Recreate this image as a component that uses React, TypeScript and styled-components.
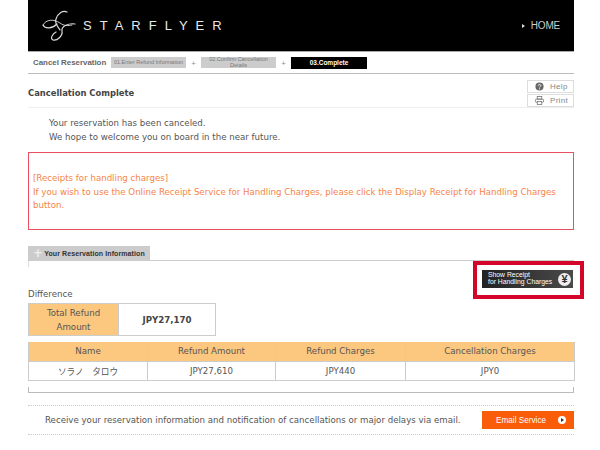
import React from 'react';
import styled, { createGlobalStyle } from 'styled-components';

const GlobalStyle = createGlobalStyle`
  * {
    box-sizing: border-box;
  }
  html, body {
    margin: 0;
    padding: 0;
    background: #fff;
  }
  body {
    font-family: "DejaVu Sans", Verdana, sans-serif;
    font-size: 8.65px;
    color: #555;
  }
`;

const Page = styled.div`
  width: 546px;
  height: 450px;
  margin-left: 28px;
`;

const Header = styled.header`
  height: 52px;
  background: #000;
  display: flex;
  align-items: center;
  justify-content: space-between;
  padding: 0 14px;
  border-bottom: 1px solid #aaa;
`;

const Brand = styled.div`
  display: flex;
  align-items: center;
  gap: 7px;
`;

const Wordmark = styled.span`
  font-family: "Liberation Sans", Arial, sans-serif;
  font-size: 13px;
  letter-spacing: 8px;
  color: #e8e8e8;
`;

const HomeLink = styled.div`
  display: flex;
  align-items: center;
  gap: 6px;
  font-family: "Liberation Sans", Arial, sans-serif;
  font-size: 10px;
  letter-spacing: -0.2px;
  color: #ccc;
  &::before {
    content: "";
    border-left: 3px solid #ddd;
    border-top: 2.5px solid transparent;
    border-bottom: 2.5px solid transparent;
  }
`;

const StepBar = styled.nav`
  height: 22px;
  display: flex;
  align-items: center;
  padding-left: 5px;
  border-bottom: 1px solid #bbb;
`;

const StepTitle = styled.span`
  font-family: "Liberation Sans", Arial, sans-serif;
  font-size: 7.9px;
  font-weight: bold;
  color: #666;
  width: 78px;
  white-space: nowrap;
`;

const Step = styled.span<{ $active?: boolean }>`
  width: ${p => (p.$active ? 76 : 75)}px;
  height: ${p => (p.$active ? 12 : 11)}px;
  display: flex;
  align-items: center;
  justify-content: center;
  text-align: center;
  font-family: "Liberation Sans", Arial, sans-serif;
  font-size: ${p => (p.$active ? 6.5 : 5.5)}px;
  line-height: 5.5px;
  font-weight: ${p => (p.$active ? 'bold' : 'normal')};
  background: ${p => (p.$active ? '#000' : '#ccc')};
  color: ${p => (p.$active ? '#fff' : '#777')};
`;

const StepSep = styled.span`
  width: 15px;
  text-align: center;
  font-size: 6px;
  color: #888;
`;

const TitleRow = styled.div`
  height: 34px;
  display: flex;
  align-items: flex-start;
  justify-content: space-between;
  padding-top: 6px;
  border-bottom: 1px solid #eee;
`;

const PageTitle = styled.h1`
  margin: 7px 0 0;
  font-size: 8.4px;
  line-height: 12px;
  font-weight: bold;
  color: #444;
`;

const ToolColumn = styled.div`
  display: flex;
  flex-direction: column;
  gap: 1px;
`;

const ToolButton = styled.div`
  width: 47px;
  height: 13px;
  border: 1px solid #ddd;
  display: flex;
  align-items: center;
  gap: 6px;
  padding: 0 0 1px 7px;
  font-family: "Liberation Sans", Arial, sans-serif;
  font-size: 8px;
  letter-spacing: 0.3px;
  color: #888;
`;

const Message = styled.div`
  padding: 8px 0 0 21px;
  height: 37px;
  line-height: 14px;
`;

const Notice = styled.div`
  margin-top: 7px;
  height: 78px;
  border: 1px solid #e8505f;
  padding: 19px 4px 0;
  line-height: 13.7px;
  color: #f58448;
`;

const Tab = styled.div`
  margin-top: 16px;
  height: 14px;
  width: 122px;
  background: #ccc;
  display: flex;
  align-items: center;
  gap: 1px;
  padding-left: 5px;
  font-family: "Liberation Sans", Arial, sans-serif;
  font-size: 7px;
  letter-spacing: 0.1px;
  font-weight: bold;
  white-space: nowrap;
  color: #333;
`;

const TabPlus = styled.span`
  font-family: "DejaVu Sans", sans-serif;
  font-size: 12px;
  line-height: 12px;
  color: #eee;
`;

const SectionRule = styled.div`
  position: relative;
  height: 39px;
  border-top: 1px solid #ccc;
  display: flex;
  align-items: flex-end;
  justify-content: space-between;
  &::before {
    content: "";
    position: absolute;
    left: 0;
    top: 0;
    width: 1px;
    height: 6px;
    background: #ddd;
  }
`;

const Caption = styled.div``;

const ReceiptFrame = styled.div`
  width: 111px;
  height: 38px;
  border: 4px solid #d3062a;
  margin-right: -10px;
  padding: 5px 7px 7px 5px;
`;

const ReceiptButton = styled.div`
  height: 18px;
  background: linear-gradient(90deg, #222, #4a4a4a);
  display: flex;
  align-items: center;
  justify-content: space-between;
  padding: 0 2px 0 6px;
  font-family: "Liberation Sans", Arial, sans-serif;
  font-size: 6.8px;
  line-height: 6.8px;
  white-space: nowrap;
  color: #fff;
`;

const YenDot = styled.span`
  width: 13px;
  height: 13px;
  border-radius: 50%;
  background: #eee;
  color: #333;
  display: flex;
  align-items: center;
  justify-content: center;
  font-size: 11px;
  font-weight: bold;
`;

const TotalTable = styled.table`
  margin-top: 4px;
  width: 188px;
  height: 33px;
  border-collapse: collapse;
  table-layout: fixed;
`;

const TotalLabel = styled.th`
  width: 90px;
  padding: 0;
  border: 1px solid #ccc;
  background: #fcc77f;
  font-weight: normal;
  line-height: 14px;
  color: #555;
`;

const TotalValue = styled.td`
  padding: 0;
  border: 1px solid #ccc;
  text-align: center;
  font-weight: bold;
  color: #444;
`;

const ChargesTable = styled.table`
  margin-top: 6px;
  width: 546px;
  border-collapse: collapse;
  table-layout: fixed;
`;

const HeadCell = styled.th<{ $width: number }>`
  width: ${p => p.$width}px;
  height: 19px;
  padding: 0;
  border: 1px solid #ccc;
  border-top: 0;
  background: #fcc77f;
  font-weight: normal;
  color: #555;
`;

const BodyCell = styled.td`
  height: 19px;
  padding: 0;
  border: 1px solid #ccc;
  text-align: center;
  color: #555;
  font-family: "DejaVu Sans", "Noto Sans CJK JP", sans-serif;
`;

const ClosingRule = styled.div`
  margin-top: 6px;
  height: 6px;
  border: 1px solid #bbb;
  border-top: 0;
`;

const MailRow = styled.div`
  margin-top: 12px;
  height: 30px;
  border-top: 1px dotted #ccc;
  border-bottom: 1px dotted #ccc;
  display: flex;
  align-items: center;
  justify-content: space-between;
  padding-left: 17px;
  white-space: nowrap;
`;

const MailButton = styled.div`
  width: 92px;
  height: 18px;
  background: #f95d0a;
  display: flex;
  align-items: center;
  justify-content: space-between;
  padding: 1px 8px 0 14px;
  font-family: "Liberation Sans", Arial, sans-serif;
  font-size: 8.2px;
  color: #fff;
`;

const MailDot = styled.span`
  width: 8px;
  height: 8px;
  border-radius: 50%;
  background: #fff;
  display: flex;
  align-items: center;
  justify-content: center;
  &::after {
    content: "";
    border-left: 3px solid #333;
    border-top: 2px solid transparent;
    border-bottom: 2px solid transparent;
  }
`;

const Logo = () => (
  <svg width="34" height="32" viewBox="0 0 34 32" fill="none" stroke="#dcdcdc" strokeLinecap="round">
    <path d="M1 15 C4 9 12 9 18 13 C22 16 26 16 30 15" strokeWidth="0.9" />
    <path d="M1 15 C3 19 10 19 15 14" strokeWidth="1.1" />
    <path d="M25 2 C21 0 16 3 14 9 C12 15 17 17 18 20" strokeWidth="1.2" />
    <path d="M33 14 C27 13 19 16 20 21 C21 26 15 31 11 30 C8 29 10 24 14 22" strokeWidth="1.2" />
  </svg>
);

const HelpIcon = () => (
  <svg width="9" height="9" viewBox="0 0 10 10">
    <circle cx="5" cy="5" r="4.5" fill="#666" />
    <path d="M3.5 4 C3.5 2.4 6.5 2.4 6.5 4 C6.5 5 5 5 5 6" stroke="#fff" strokeWidth="1.1" fill="none" />
    <circle cx="5" cy="7.6" r="0.7" fill="#fff" />
  </svg>
);

const PrintIcon = () => (
  <svg width="9" height="9" viewBox="0 0 10 10" fill="none" stroke="#777" strokeWidth="0.9">
    <rect x="2.5" y="0.5" width="5" height="3" />
    <rect x="0.5" y="3.5" width="9" height="3.5" rx="1" />
    <rect x="2.5" y="6" width="5" height="3.5" fill="#fff" />
  </svg>
);

const columns = [
  { label: 'Name', value: 'ソラノ　タロウ', width: 119 },
  { label: 'Refund Amount', value: 'JPY27,610', width: 128 },
  { label: 'Refund Charges', value: 'JPY440', width: 130 },
  { label: 'Cancellation Charges', value: 'JPY0', width: 169 },
];

export default function App() {
  return (
    <Page>
      <GlobalStyle />
      <Header>
        <Brand>
          <Logo />
          <Wordmark>STARFLYER</Wordmark>
        </Brand>
        <HomeLink>HOME</HomeLink>
      </Header>

      <StepBar>
        <StepTitle>Cancel Reservation</StepTitle>
        <Step>01.Enter Refund Information</Step>
        <StepSep>+</StepSep>
        <Step>02.Confirm Cancellation<br />Details</Step>
        <StepSep>+</StepSep>
        <Step $active>03.Complete</Step>
      </StepBar>

      <TitleRow>
        <PageTitle>Cancellation Complete</PageTitle>
        <ToolColumn>
          <ToolButton><HelpIcon />Help</ToolButton>
          <ToolButton><PrintIcon />Print</ToolButton>
        </ToolColumn>
      </TitleRow>

      <Message>
        Your reservation has been canceled.<br />
        We hope to welcome you on board in the near future.
      </Message>

      <Notice>
        [Receipts for handling charges]<br />
        If you wish to use the Online Receipt Service for Handling Charges, please click the Display Receipt for Handling Charges button.
      </Notice>

      <Tab><TabPlus>+</TabPlus>Your Reservation Information</Tab>
      <SectionRule>
        <Caption>Difference</Caption>
        <ReceiptFrame>
          <ReceiptButton>
            <span>Show Receipt<br />for Handling Charges</span>
            <YenDot>¥</YenDot>
          </ReceiptButton>
        </ReceiptFrame>
      </SectionRule>

      <TotalTable>
        <tbody>
          <tr>
            <TotalLabel>Total Refund<br />Amount</TotalLabel>
            <TotalValue>JPY27,170</TotalValue>
          </tr>
        </tbody>
      </TotalTable>

      <ChargesTable>
        <thead>
          <tr>
            {columns.map(c => <HeadCell key={c.label} $width={c.width}>{c.label}</HeadCell>)}
          </tr>
        </thead>
        <tbody>
          <tr>
            {columns.map(c => <BodyCell key={c.label}>{c.value}</BodyCell>)}
          </tr>
        </tbody>
      </ChargesTable>

      <ClosingRule />

      <MailRow>
        <span>Receive your reservation information and notification of cancellations or major delays via email.</span>
        <MailButton>Email Service<MailDot /></MailButton>
      </MailRow>
    </Page>
  );
}
